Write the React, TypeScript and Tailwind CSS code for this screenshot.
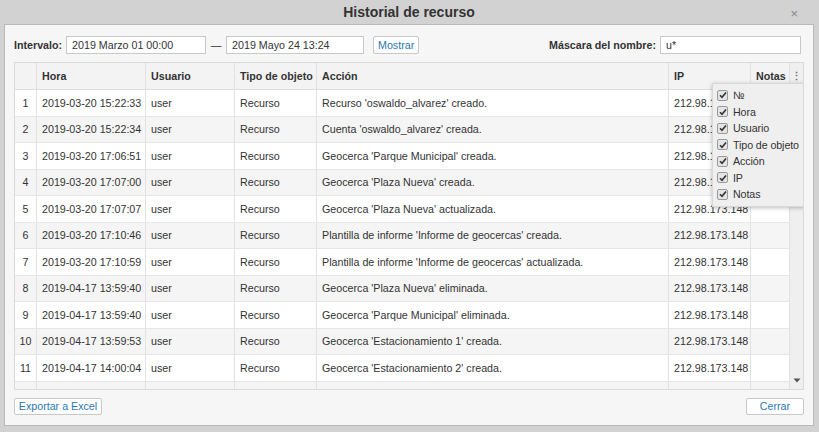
import React from "react";

type Row = { n: number; time: string; action: string };

const rows: Row[] = [
  { n: 1, time: "2019-03-20 15:22:33", action: "Recurso 'oswaldo_alvarez' creado." },
  { n: 2, time: "2019-03-20 15:22:34", action: "Cuenta 'oswaldo_alvarez' creada." },
  { n: 3, time: "2019-03-20 17:06:51", action: "Geocerca 'Parque Municipal' creada." },
  { n: 4, time: "2019-03-20 17:07:00", action: "Geocerca 'Plaza Nueva' creada." },
  { n: 5, time: "2019-03-20 17:07:07", action: "Geocerca 'Plaza Nueva' actualizada." },
  { n: 6, time: "2019-03-20 17:10:46", action: "Plantilla de informe 'Informe de geocercas' creada." },
  { n: 7, time: "2019-03-20 17:10:59", action: "Plantilla de informe 'Informe de geocercas' actualizada." },
  { n: 8, time: "2019-04-17 13:59:40", action: "Geocerca 'Plaza Nueva' eliminada." },
  { n: 9, time: "2019-04-17 13:59:40", action: "Geocerca 'Parque Municipal' eliminada." },
  { n: 10, time: "2019-04-17 13:59:53", action: "Geocerca 'Estacionamiento 1' creada." },
  { n: 11, time: "2019-04-17 14:00:04", action: "Geocerca 'Estacionamiento 2' creada." },
];

const cols = "grid grid-cols-[22px_109px_89px_82px_352px_82px_39px] shrink-0";
const cell = "border-r border-[#e2e2e2] px-[5px] flex items-center overflow-hidden whitespace-nowrap";

const menuItems = ["№", "Hora", "Usuario", "Tipo de objeto", "Acción", "IP", "Notas"];

const Check = () => (
  <span className="w-[11px] h-[11px] shrink-0 border border-[#9a9a9a] rounded-[2px] bg-[#e4e4e4] flex items-center justify-center">
    <svg width="8" height="8" viewBox="0 0 8 8">
      <path d="M1 4.2 L3 6.2 L7 1.5" stroke="#333" strokeWidth="1.6" fill="none" />
    </svg>
  </span>
);

const App = () => {
  return (
    <div
      className="w-[819px] h-[432px] bg-[#d2d2d2] flex flex-col pl-[4px] pr-[5px] pb-[6px] text-[#333] text-[10.7px]"
      style={{ fontFamily: '"Liberation Sans", Arial, sans-serif' }}
    >
      <div className="h-[24px] shrink-0 relative flex items-center justify-center">
        <span className="text-[14px] font-bold text-[#333]">Historial de recurso</span>
        <span className="absolute right-[16px] top-[4px] text-[13px] text-[#888]">×</span>
      </div>

      <div className="flex-1 border border-[#b9b9b9] bg-[#f6f6f6] px-[9px] pt-[11px] flex flex-col">
        {/* toolbar */}
        <div className="flex items-center h-[18px] shrink-0">
          <span className="font-bold">Intervalo:</span>
          <div className="ml-[4px] w-[140px] h-[18px] border border-[#c8c8c8] bg-white flex items-center px-[5px]">
            2019 Marzo 01 00:00
          </div>
          <span className="w-[20px] text-center">—</span>
          <div className="w-[138px] h-[18px] border border-[#c8c8c8] bg-white flex items-center px-[5px]">
            2019 Mayo 24 13:24
          </div>
          <button className="ml-[9px] w-[46px] h-[18px] border border-[#c8c8c8] rounded-[2px] bg-white text-[#2b78b4] flex items-center justify-center">
            Mostrar
          </button>
          <div className="flex-1" />
          <span className="font-bold">Máscara del nombre:</span>
          <div className="ml-[4px] mr-[3px] w-[141px] h-[18px] border border-[#c8c8c8] bg-white flex items-center px-[5px]">
            u*
          </div>
        </div>

        {/* table */}
        <div className="relative mt-[8px] h-[328px] shrink-0 border border-[#dadada] flex overflow-hidden">
          <div className="flex flex-col">
            <div className={`${cols} h-[27px] bg-[#f3f3f3] border-b border-[#dedede] font-bold`}>
              <div className={cell}></div>
              <div className={cell}>Hora</div>
              <div className={cell}>Usuario</div>
              <div className={cell}>Tipo de objeto</div>
              <div className={cell}>Acción</div>
              <div className={cell}>IP</div>
              <div className={cell}>Notas</div>
            </div>
            {rows.map((r) => (
              <div
                key={r.n}
                className={`${cols} h-[26.5px] border-b border-[#e6e6e6] ${r.n % 2 === 0 ? "bg-[#f5f5f5]" : "bg-white"}`}
              >
                <div className={`${cell} justify-center px-0`}>{r.n}</div>
                <div className={cell}>{r.time}</div>
                <div className={cell}>user</div>
                <div className={cell}>Recurso</div>
                <div className={cell}>{r.action}</div>
                <div className={cell}>212.98.173.148</div>
                <div className={cell}></div>
              </div>
            ))}
            <div className={`${cols} h-[26.5px] bg-[#f5f5f5]`}>
              {Array.from({ length: 7 }).map((_, i) => (
                <div key={i} className={cell}></div>
              ))}
            </div>
          </div>
          <div className="w-[16px] bg-[#efefef] flex flex-col items-center">
            <div className="h-[27px] shrink-0 flex items-center justify-center text-[#777] font-bold">⋮</div>
            <div className="flex-1" />
            <svg width="8" height="5" viewBox="0 0 8 5" className="mb-[6px]">
              <path d="M0.5 0.5 L7.5 0.5 L4 4.5 Z" fill="#555" />
            </svg>
          </div>

          {/* column menu */}
          <div className="absolute left-[697px] top-[20px] w-[94px] bg-[#efefef] border border-[#d8d8d8] shadow-[0_1px_4px_rgba(0,0,0,0.25)] py-[3px]">
            {menuItems.map((m) => (
              <div key={m} className="h-[16.5px] flex items-center gap-[5px] pl-[4px]">
                <Check />
                <span className="whitespace-nowrap tracking-[-0.1px]">{m}</span>
              </div>
            ))}
          </div>
        </div>

        {/* footer */}
        <div className="mt-[8px] flex justify-between">
          <button className="w-[88px] h-[17px] border border-[#c8c8c8] rounded-[2px] bg-white text-[#2b78b4] flex items-center justify-center">
            Exportar a Excel
          </button>
          <button className="w-[58px] h-[17px] border border-[#c8c8c8] rounded-[2px] bg-white text-[#2b78b4] flex items-center justify-center">
            Cerrar
          </button>
        </div>
      </div>
    </div>
  );
};

export default App;
